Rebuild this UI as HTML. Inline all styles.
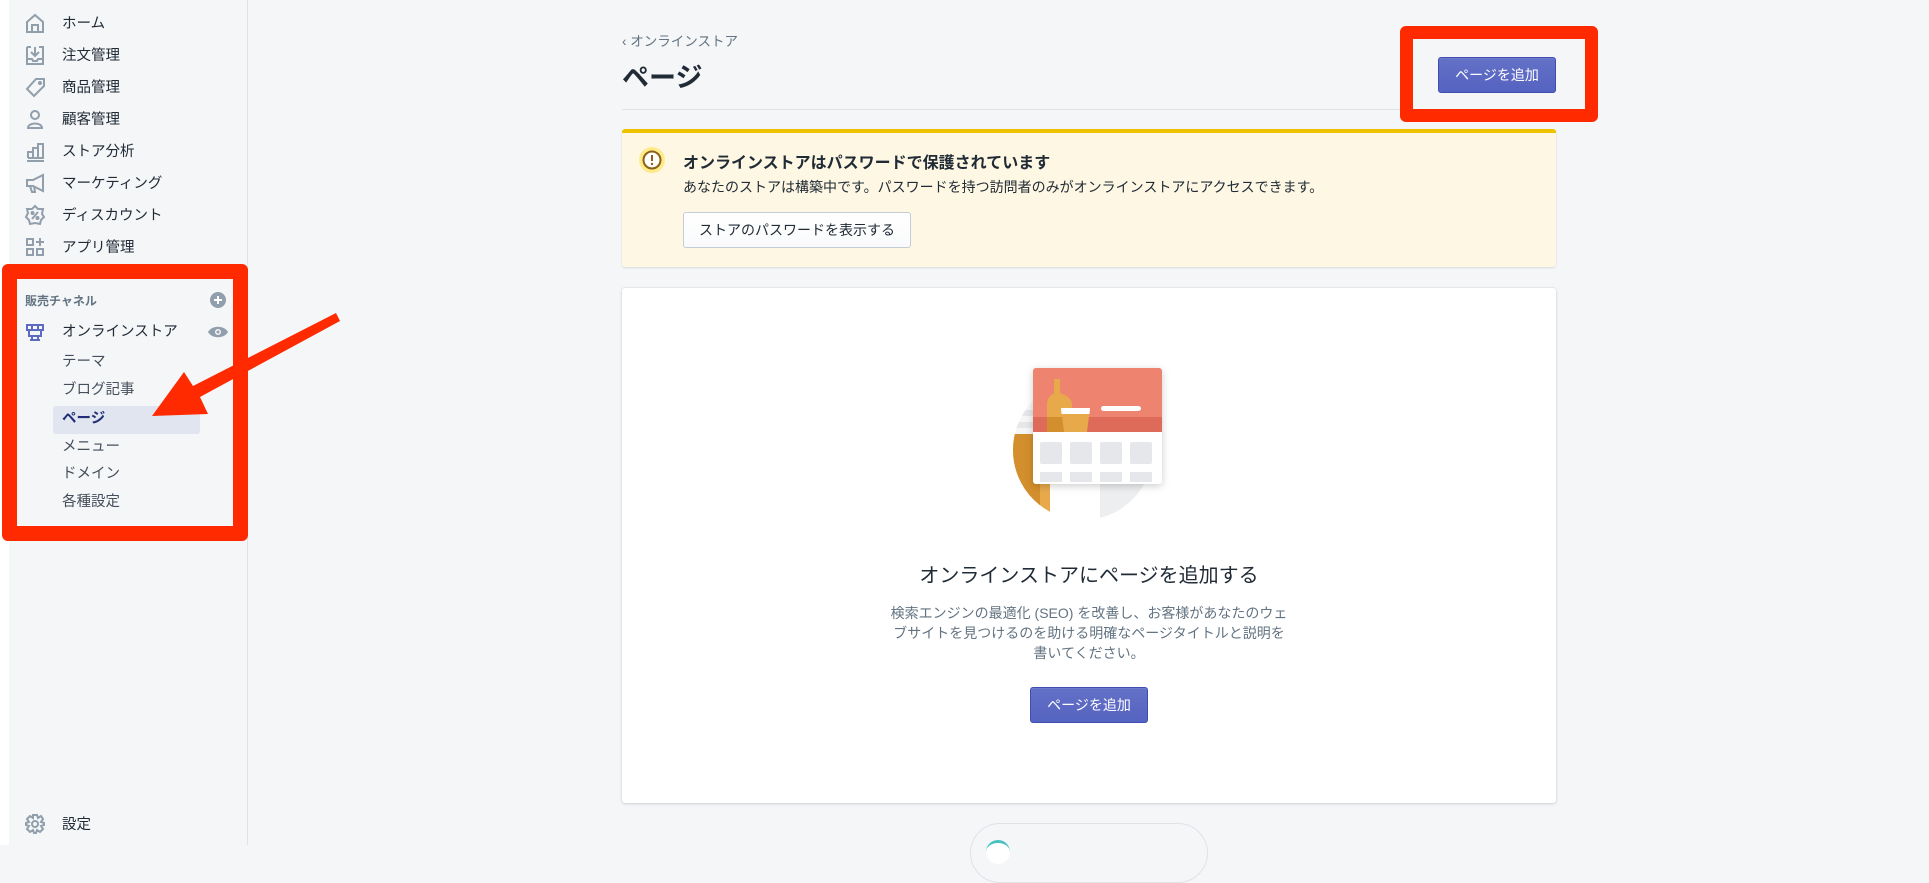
<!DOCTYPE html>
<html><head><meta charset="utf-8"><style>
*{margin:0;padding:0;box-sizing:border-box}
body{width:1929px;height:845px;overflow:hidden;background:#f4f6f8;font-family:"Liberation Sans","Noto Sans CJK JP",sans-serif;color:#212b36;position:relative}
.abs{position:absolute}
#side{position:absolute;left:9px;top:0;width:239px;height:845px;background:#f4f6f8;border-right:1px solid #dfe3e8}
#strip{position:absolute;left:0;top:0;width:9px;height:845px;background:#fff}
.it{position:absolute;left:62px;font-size:14.5px;color:#212b36;line-height:18px;transform:translateY(-9px)}
.sub{position:absolute;left:62px;font-size:14.5px;color:#454f5b;line-height:18px;transform:translateY(-9px)}
.btnp{position:absolute;background:linear-gradient(#6371c7,#5563c1);border:1px solid #3f4eae;border-radius:3px;color:#fff;font-size:14px;text-align:center;box-shadow:inset 0 1px 0 #6f7bcb}
</style></head><body>
<div id="strip"></div>
<div id="side"></div>
<svg class="abs" style="left:0;top:0" width="248" height="845" fill="none" stroke="#919eab" stroke-width="2">
<g transform="translate(25,13)"><path d="M2 9 L10 2 L18 9 V19 H2Z M7 19 V12 H13 V19"/></g>
<g transform="translate(25,45)"><path d="M2 2 H6 M14 2 H18 V19 H2 V2 M10 2 V10 M6 7 L10 11 L14 7 M2 14 H7 L8 16 H12 L13 14 H18"/></g>
<g transform="translate(25,77)"><path d="M11 2 H19 V9 L9 19 L2 12 Z"/><circle cx="15" cy="6" r="1"/></g>
<g transform="translate(25,109)"><circle cx="10" cy="6" r="4"/><path d="M3 19 C3 13 17 13 17 19 Z"/></g>
<g transform="translate(25,141)"><path d="M2 20 H19 M3 17 V11 H8 V17 M8 17 V7 H13 V17 M13 17 V3 H18 V17 H3"/></g>
<g transform="translate(25,173)"><path d="M2 7 H8 L18 2 V18 L8 13 H2 Z M5 13 L7 19 H10 L9 13"/></g>
<g transform="translate(25,205)"><path d="M10 1 L13 4 L18 4 L17 9 L19 12 L16 15 L15 19 L10 18 L5 19 L4 15 L1 12 L3 8 L2 4 L7 4Z M7 14 L13 7"/><circle cx="7.5" cy="8" r="1"/><circle cx="12.5" cy="13" r="1"/></g>
<g transform="translate(25,237)"><rect x="2" y="2" width="6" height="6"/><rect x="2" y="12" width="6" height="6"/><rect x="12" y="12" width="6" height="6"/><path d="M15 1 V9 M11 5 H19"/></g>
<g transform="translate(25,814)"><circle cx="10" cy="10" r="3"/><path d="M8 1 H12 L13 4 L16 2 L18 5 L16 8 L19 9 V11 L16 12 L18 15 L15 18 L12 16 L11 19 H9 L8 16 L5 18 L2 15 L4 12 L1 11 V9 L4 8 L2 5 L5 2 L8 4Z"/></g>
</svg>
<div class="it" style="top:24px">ホーム</div>
<div class="it" style="top:56px">注文管理</div>
<div class="it" style="top:88px">商品管理</div>
<div class="it" style="top:120px">顧客管理</div>
<div class="it" style="top:152px">ストア分析</div>
<div class="it" style="top:184px">マーケティング</div>
<div class="it" style="top:216px">ディスカウント</div>
<div class="it" style="top:248px">アプリ管理</div>
<div class="it" style="top:825px">設定</div>

<div class="abs" style="left:2px;top:264px;width:246px;height:277px;border:15px solid #ff2a00;border-radius:6px"></div>
<div class="abs" style="left:25px;top:292px;font-size:12px;font-weight:bold;color:#637381">販売チャネル</div>
<svg class="abs" style="left:208px;top:290px" width="20" height="20"><circle cx="10" cy="10" r="8" fill="#919eab"/><path d="M10 6V14M6 10H14" stroke="#fff" stroke-width="2"/></svg>
<svg class="abs" style="left:25px;top:322px" width="20" height="20" fill="none" stroke="#5c6ac4" stroke-width="2"><path d="M2 3 H18 V8 H2Z M4 8 V14 H16 V8 M7 14 V18 M13 14 V18 M5 18 H15"/><path d="M7 3V8 M13 3V8"/></svg>
<div class="it" style="top:332px">オンラインストア</div>
<svg class="abs" style="left:207px;top:325px" width="22" height="14"><path d="M1 7 C5 0 17 0 21 7 C17 14 5 14 1 7Z" fill="#919eab"/><circle cx="11" cy="7" r="3" fill="#f4f6f8"/><circle cx="11" cy="7" r="1.5" fill="#919eab"/></svg>
<div class="sub" style="top:362px">テーマ</div>
<div class="sub" style="top:390px">ブログ記事</div>
<div class="abs" style="left:53px;top:406px;width:147px;height:28px;background:#e0e5ef;border-radius:3px"></div>
<div class="sub" style="top:419px;color:#202e78;font-weight:bold">ページ</div>
<div class="sub" style="top:447px">メニュー</div>
<div class="sub" style="top:474px">ドメイン</div>
<div class="sub" style="top:502px">各種設定</div>
<svg class="abs" style="left:0;top:0" width="360" height="460"><path d="M152 416 L184 372 L193 386 L336 313 L340 321 L200 397 L208 414 Z" fill="#ff2a00"/></svg>

<div class="abs" style="left:622px;top:30px;font-size:13.5px;color:#637381">&#x2039; オンラインストア</div>
<div class="abs" style="left:622px;top:56px;font-size:27px;font-weight:bold;color:#212b36">ページ</div>
<div class="abs" style="left:622px;top:109px;width:934px;height:1px;background:#dfe3e8"></div>
<div class="abs" style="left:1400px;top:26px;width:198px;height:96px;border:13px solid #ff2a00;border-radius:6px"></div>
<div class="btnp" style="left:1438px;top:57px;width:118px;height:36px;line-height:34px">ページを追加</div>

<div class="abs" style="left:622px;top:129px;width:934px;height:138px;background:#fdf7e3;border-top:4px solid #eec200;box-shadow:0 1px 2px rgba(63,63,68,.15);border-radius:3px"></div>
<svg class="abs" style="left:638px;top:146px" width="28" height="28"><circle cx="14" cy="14" r="13" fill="#ffea8a"/><circle cx="14" cy="14" r="8.5" fill="#fff" stroke="#8a6116" stroke-width="2"/><path d="M14 9V15" stroke="#8a6116" stroke-width="2"/><circle cx="14" cy="18" r="1.2" fill="#8a6116"/></svg>
<div class="abs" style="left:683px;top:149px;font-size:16px;font-weight:bold">オンラインストアはパスワードで保護されています</div>
<div class="abs" style="left:683px;top:177px;font-size:14px;color:#212b36">あなたのストアは構築中です。パスワードを持つ訪問者のみがオンラインストアにアクセスできます。</div>
<div class="abs" style="left:683px;top:212px;width:228px;height:36px;border:1px solid #c4cdd5;border-radius:3px;background:linear-gradient(#fff,#f9fafb);font-size:14px;line-height:34px;text-align:center">ストアのパスワードを表示する</div>

<div class="abs" style="left:622px;top:288px;width:934px;height:515px;background:#fff;box-shadow:0 0 0 1px rgba(63,63,68,.05),0 1px 3px rgba(63,63,68,.15);border-radius:3px"></div>
<svg class="abs" style="left:1010px;top:360px" width="170" height="160">
<defs><clipPath id="c"><circle cx="73" cy="90" r="70"/></clipPath></defs>
<g clip-path="url(#c)"><rect x="0" y="0" width="170" height="170" fill="#edeef0"/><rect x="0" y="20" width="60" height="140" fill="#f6f6f7"/><rect x="0" y="50" width="30" height="6" fill="#e6e7ea"/><rect x="0" y="62" width="30" height="6" fill="#e6e7ea"/><rect x="0" y="74" width="40" height="86" fill="#e8a94b"/><rect x="0" y="74" width="30" height="86" fill="#d38f2d"/><rect x="40" y="80" width="50" height="80" fill="#fff"/><rect x="52" y="103" width="32" height="3" fill="#e5e7ea"/><rect x="52" y="113" width="25" height="3" fill="#e5e7ea"/></g>
<rect x="23" y="8" width="129" height="116" rx="3" fill="#fff" style="filter:drop-shadow(0 2px 4px rgba(0,0,0,.2))"/>
<path d="M23 11a3 3 0 0 1 3-3h123a3 3 0 0 1 3 3v46H23Z" fill="#ee8470"/>
<rect x="23" y="57" width="129" height="15" fill="#de6a5a"/>
<path d="M37 72V45Q37 37 44 33V19H50V33Q62 37 62 45V72Z" fill="#e8a94b"/><path d="M37 72V57H62V72Z" fill="#d38f2d"/>
<path d="M51 48H80L77 72H54Z" fill="#e8a94b"/><path d="M51 48H80L79.5 54H51.5Z" fill="#fff"/>
<rect x="91" y="46" width="40" height="5" rx="2.5" fill="#fff"/><rect x="90" y="57" width="42" height="9" rx="4.5" fill="#de6a5a"/>
<g fill="#e6e7ea"><rect x="30" y="82" width="22" height="22" rx="2"/><rect x="60" y="82" width="22" height="22" rx="2"/><rect x="90" y="82" width="22" height="22" rx="2"/><rect x="120" y="82" width="22" height="22" rx="2"/><rect x="30" y="112" width="22" height="10"/><rect x="60" y="112" width="22" height="10"/><rect x="90" y="112" width="22" height="10"/><rect x="120" y="112" width="22" height="10"/></g>
</svg>
<div class="abs" style="left:622px;top:559px;width:934px;text-align:center;font-size:20px;color:#212b36">オンラインストアにページを追加する</div>
<div class="abs" style="left:889px;top:603px;width:400px;text-align:center;font-size:14px;line-height:20px;color:#637381">検索エンジンの最適化 (SEO) を改善し、お客様があなたのウェブサイトを見つけるのを助ける明確なページタイトルと説明を書いてください。</div>
<div class="btnp" style="left:1030px;top:687px;width:118px;height:36px;line-height:34px">ページを追加</div>
<div class="abs" style="left:970px;top:823px;width:238px;height:60px;border:1px solid #dfe3e8;border-radius:30px"></div>
<div class="abs" style="left:986px;top:840px;width:24px;height:24px;border-radius:12px;background:#fff;border-top:3px solid #47c1bf"></div>
</body></html>
